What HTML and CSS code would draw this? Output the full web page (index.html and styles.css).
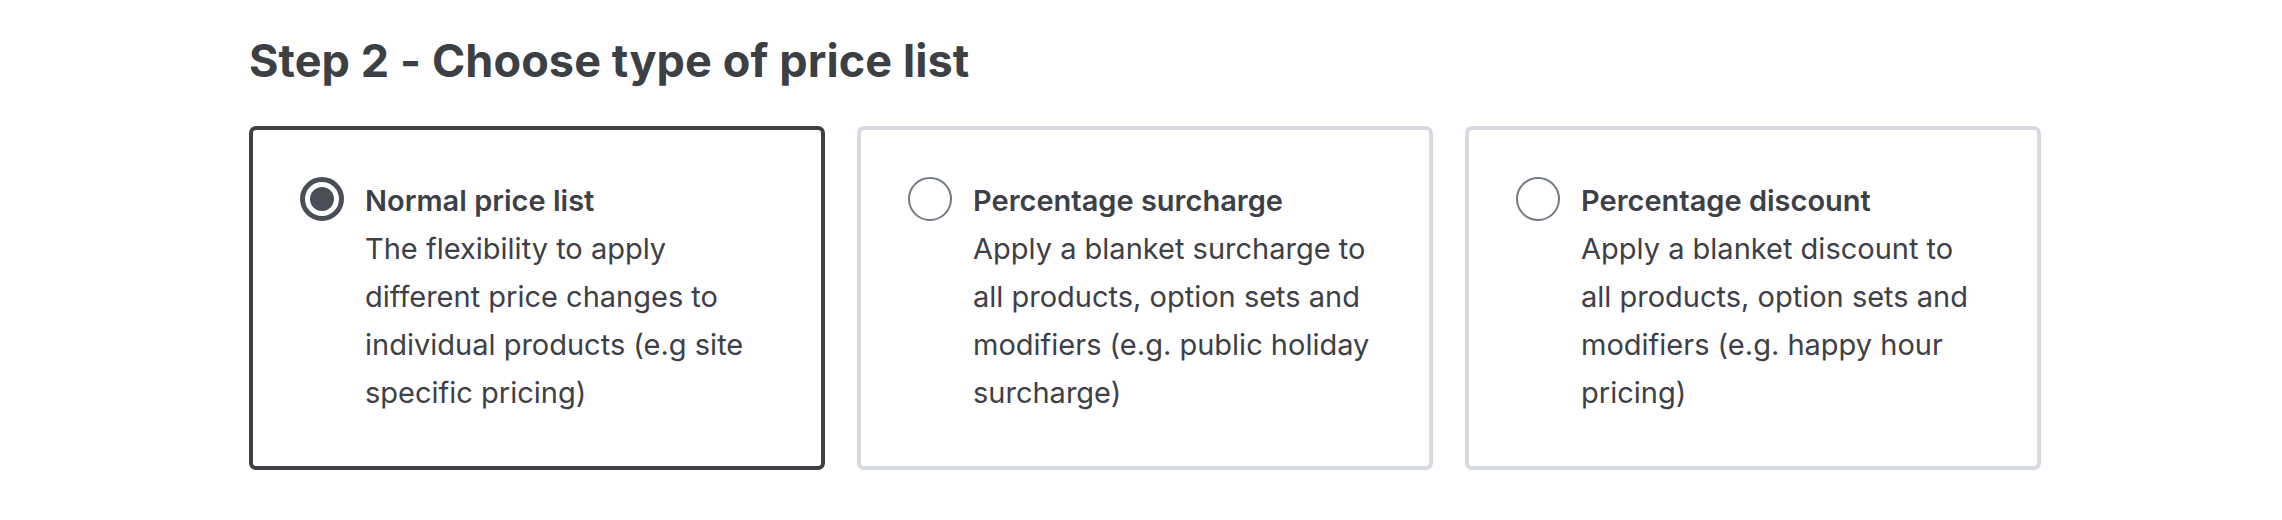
FILE: index.html
```html
<!DOCTYPE html>
<html lang="en">
<head>
<meta charset="utf-8">
<title>Choose type of price list</title>
<link rel="stylesheet" href="styles.css">
</head>
<body>
<main class="page">
  <h1 class="step-title">Step 2 - Choose type of price list</h1>
  <div class="options">
    <label class="option option--selected">
      <span class="radio radio--checked"><span class="radio-dot"></span></span>
      <span class="option-text">
        <span class="option-title">Normal price list</span>
        <span class="option-desc">The flexibility to apply different price changes to individual products (e.g site specific pricing)</span>
      </span>
    </label>
    <label class="option">
      <span class="radio"></span>
      <span class="option-text">
        <span class="option-title">Percentage surcharge</span>
        <span class="option-desc">Apply a blanket surcharge to all products, option sets and modifiers (e.g. public holiday surcharge)</span>
      </span>
    </label>
    <label class="option">
      <span class="radio"></span>
      <span class="option-text">
        <span class="option-title">Percentage discount</span>
        <span class="option-desc">Apply a blanket discount to all products, option sets and modifiers (e.g. happy hour pricing)</span>
      </span>
    </label>
  </div>
</main>
</body>
</html>
```

FILE: styles.css
```css
html, body {
  margin: 0;
  padding: 0;
  background: #ffffff;
}

body {
  width: 2282px;
  height: 520px;
  overflow: hidden;
  font-family: Inter, Roboto, "Liberation Sans", sans-serif;
  color: #3d4047;
}

.page {
  padding: 34px 0 0 249px;
}

.step-title {
  margin: 0 0 38px 0;
  font-size: 45px;
  line-height: 54px;
  font-weight: 700;
  color: #3c3f44;
  letter-spacing: 0.1px;
}

.options {
  display: flex;
  gap: 32px;
}

.option {
  box-sizing: border-box;
  width: 576px;
  height: 344px;
  border: 4px solid #d5dbe0;
  border-radius: 7px;
  padding: 47px 51px 0 47px;
  display: flex;
  align-items: flex-start;
  gap: 21px;
}

.option--selected {
  border-color: #3d4045;
}

.radio {
  flex: none;
  box-sizing: border-box;
  width: 44px;
  height: 44px;
  border: 2px solid #737a83;
  border-radius: 50%;
  display: flex;
  align-items: center;
  justify-content: center;
}

.radio--checked {
  border: 5px solid #4a4f57;
}

.radio-dot {
  width: 24px;
  height: 24px;
  border-radius: 50%;
  background: #4a4f57;
}

.option-text {
  flex: 1;
  display: flex;
  flex-direction: column;
  font-size: 29px;
  line-height: 48px;
}

.option-title {
  font-weight: 600;
}

.option-desc {
  font-weight: 400;
}
```
